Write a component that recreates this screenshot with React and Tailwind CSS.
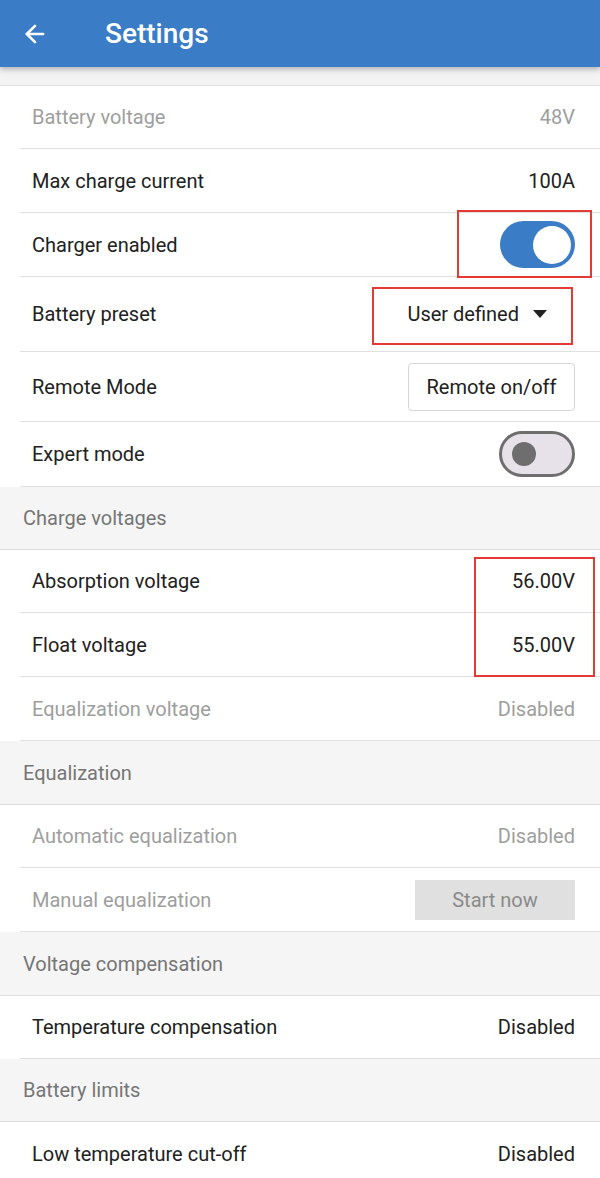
import { ArrowLeft } from 'lucide-react';

const Row = ({ label, value, muted, h, children }) => (
  <div className={`ml-5 flex items-center justify-between border-b border-[#e0e0e0] pl-3 pr-[25px] ${h}`}>
    <span className={muted ? 'text-[#9e9e9e]' : 'text-[#212121]'}>{label}</span>
    {value && <span className={muted ? 'text-[#9e9e9e]' : 'text-[#212121]'}>{value}</span>}
    {children}
  </div>
);

const Section = ({ title, h = 'h-[63px]' }) => (
  <div className={`flex items-center border-b border-[#dcdcdc] bg-[#f5f5f5] pl-[23px] text-[#757575] ${h}`}>
    {title}
  </div>
);

const Toggle = ({ on }) =>
  on ? (
    <div className="flex h-[47px] w-[75px] items-center justify-end rounded-full bg-[#3a7cc6] pr-[4px]">
      <div className="h-[38px] w-[38px] rounded-full bg-white" />
    </div>
  ) : (
    <div className="flex h-[46px] w-[76px] items-center rounded-full border-[3px] border-[#6e6e6e] bg-[#e7e1ea] pl-[10px]">
      <div className="h-[24px] w-[24px] rounded-full bg-[#6e6e6e]" />
    </div>
  );

export default function App() {
  return (
    <div className="h-[1178px] w-[600px] overflow-hidden bg-white text-[20px] font-['Roboto',sans-serif]">
      <div className="relative z-10 flex h-[67px] items-center bg-[#3a7cc6] shadow-[0_2px_6px_rgba(0,0,0,0.3)]">
        <ArrowLeft className="ml-[21px] text-white" size={28} strokeWidth={2.2} />
        <span className="ml-[56px] text-[28px] font-medium text-white">Settings</span>
      </div>
      <div className="h-[19px] border-b border-[#e0e0e0] bg-[#f3f3f3]" />

      <Row label="Battery voltage" value="48V" muted h="h-[63px]" />
      <Row label="Max charge current" value="100A" h="h-[64px]" />
      <div className="relative">
        <Row label="Charger enabled" h="h-[64px]">
          <Toggle on />
        </Row>
        <div className="absolute left-[457px] top-[-3px] h-[68px] w-[135px] border-2 border-[#e53935]" />
      </div>
      <div className="relative">
        <Row label="Battery preset" h="h-[75px]">
          <div className="flex items-center gap-[14px] text-[#212121]">
            <span>User defined</span>
            <svg width="14" height="8" viewBox="0 0 14 8" className="mr-[28px]">
              <path d="M0 0h14L7 8z" fill="#212121" />
            </svg>
          </div>
        </Row>
        <div className="absolute left-[372px] top-[10px] h-[58px] w-[201px] border-2 border-[#e53935]" />
      </div>
      <Row label="Remote Mode" h="h-[70px]">
        <div className="flex h-[48px] w-[167px] items-center justify-center rounded-[4px] border border-[#d6d6d6] text-[#212121]">
          Remote on/off
        </div>
      </Row>
      <Row label="Expert mode" h="h-[65px]">
        <Toggle />
      </Row>

      <Section title="Charge voltages" />
      <div className="relative">
        <Row label="Absorption voltage" value="56.00V" h="h-[63px]" />
        <Row label="Float voltage" value="55.00V" h="h-[64px]" />
        <div className="absolute left-[474px] top-[7px] h-[120px] w-[121px] border-2 border-[#e53935]" />
      </div>
      <Row label="Equalization voltage" value="Disabled" muted h="h-[64px]" />

      <Section title="Equalization" h="h-[64px]" />
      <Row label="Automatic equalization" value="Disabled" muted h="h-[63px]" />
      <Row label="Manual equalization" muted h="h-[64px]">
        <div className="flex h-[40px] w-[160px] items-center justify-center bg-[#e0e0e0] text-[#8a8a8a]">
          Start now
        </div>
      </Row>

      <Section title="Voltage compensation" h="h-[64px]" />
      <Row label="Temperature compensation" value="Disabled" h="h-[63px]" />

      <Section title="Battery limits" />
      <Row label="Low temperature cut-off" value="Disabled" h="h-[64px]" />
    </div>
  );
}
